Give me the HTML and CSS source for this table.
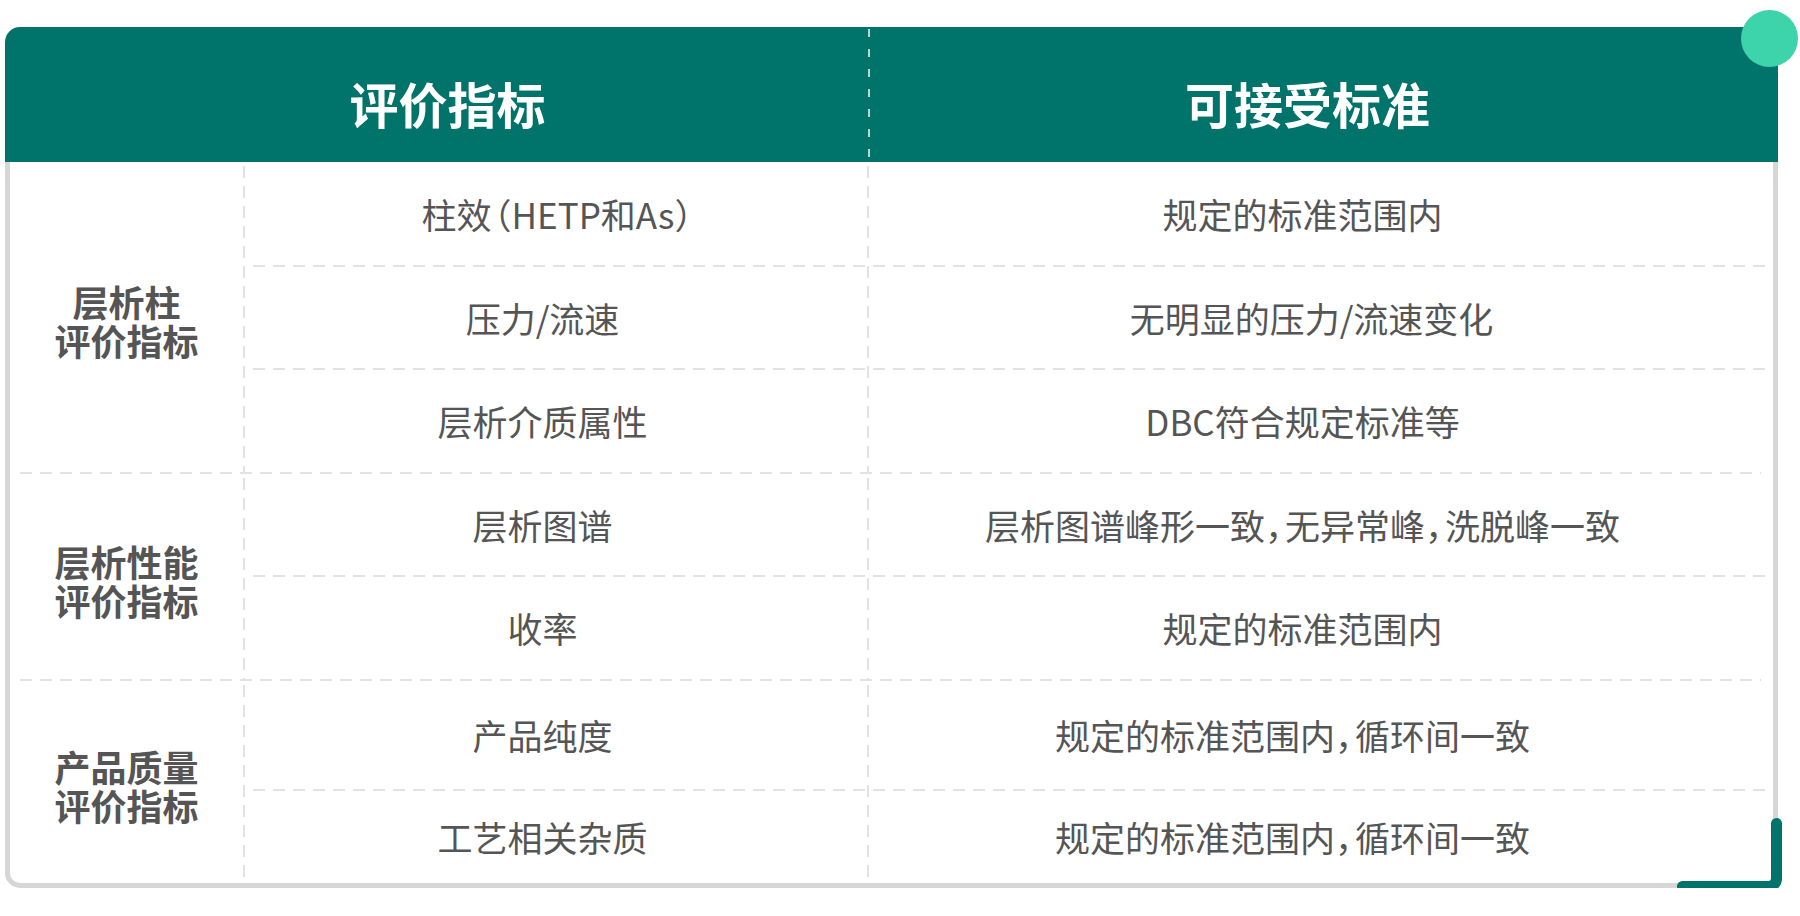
FILE: index.html
```html
<!DOCTYPE html>
<html lang="zh-CN">
<head>
<meta charset="utf-8">
<title>评价指标</title>
<link rel="stylesheet" href="styles.css">
</head>
<body>
<div class="card">
  <div class="head">
    <div class="h h1">评价指标</div>
    <div class="h h2">可接受标准</div>
  </div>
  <div class="tbody">
    <div class="group g1">
      <div class="label"><span class="ln">层析柱</span><span class="ln">评价指标</span></div>
      <div class="items">
        <div class="item r1"><div class="c2 nudge-r">柱效<span class="lp">（</span>HETP和As<span class="rp">）</span></div><div class="c3">规定的标准范围内</div></div>
        <div class="line"></div>
        <div class="item r2"><div class="c2">压力/流速</div><div class="c3 shift-r">无明显的压力/流速变化</div></div>
        <div class="line"></div>
        <div class="item r3"><div class="c2">层析介质属性</div><div class="c3">DBC符合规定标准等</div></div>
      </div>
    </div>
    <div class="sep"></div>
    <div class="group g2">
      <div class="label"><span class="ln">层析性能</span><span class="ln">评价指标</span></div>
      <div class="items">
        <div class="item r4"><div class="c2">层析图谱</div><div class="c3">层析图谱峰形一致<span class="cm">，</span>无异常峰<span class="cm">，</span>洗脱峰一致</div></div>
        <div class="line"></div>
        <div class="item r5"><div class="c2">收率</div><div class="c3">规定的标准范围内</div></div>
      </div>
    </div>
    <div class="sep"></div>
    <div class="group g3">
      <div class="label"><span class="ln">产品质量</span><span class="ln">评价指标</span></div>
      <div class="items">
        <div class="item r6"><div class="c2">产品纯度</div><div class="c3 shift-l">规定的标准范围内<span class="cm">，</span>循环间一致</div></div>
        <div class="line"></div>
        <div class="item r7"><div class="c2">工艺相关杂质</div><div class="c3 shift-l">规定的标准范围内<span class="cm">，</span>循环间一致</div></div>
      </div>
    </div>
  </div>
  <span class="dot"></span>
  <svg class="bracket" width="105" height="74" viewBox="0 0 105 74">
    <path d="M5.5 68.5 H91.5 A8 8 0 0 0 99.5 60.5 V5.5" fill="none" stroke="#00736b" stroke-width="11" stroke-linecap="round" stroke-linejoin="round"/>
  </svg>
</div>
</body>
</html>
```

FILE: styles.css
```css
html, body {
  margin: 0;
  padding: 0;
  background: #ffffff;
}

body {
  font-family: "Noto Sans CJK SC", "Noto Sans", sans-serif;
  color: #555555;
}

.card {
  position: relative;
  width: 1773px;
  margin: 27px 0 0 5px;
}

.head {
  display: grid;
  grid-template-columns: 863px 910px;
  height: 135px;
  background: #00736b;
  border-radius: 15px 0 0 0;
}

.h {
  display: flex;
  align-items: center;
  justify-content: center;
  padding-top: 16px;
  box-sizing: border-box;
  color: #ffffff;
  font-size: 49px;
  font-weight: 700;
  line-height: 1;
}

.h1 {
  padding-left: 22px;
}

.h2 {
  padding-right: 31px;
  background-image: repeating-linear-gradient(to bottom, rgba(255, 255, 255, 0.72) 0 8px, transparent 8px 20px);
  background-size: 2px 100%;
  background-position: 0 2px;
  background-repeat: no-repeat;
}

.tbody {
  border: 5px solid #d6d6d6;
  border-top: none;
  border-radius: 0 0 15px 15px;
}

.group {
  display: grid;
  grid-template-columns: 233px 1530px;
}

.label {
  display: flex;
  flex-direction: column;
  align-items: center;
  justify-content: center;
  padding-top: 8px;
  box-sizing: border-box;
  text-align: center;
  font-size: 36px;
  font-weight: 700;
  color: #555555;
}

.ln {
  display: block;
  height: 39px;
  line-height: 39px;
  white-space: nowrap;
}

.items {
  display: flex;
  flex-direction: column;
  background-image:
    repeating-linear-gradient(to bottom, #e2e2e2 0 12px, transparent 12px 20px),
    repeating-linear-gradient(to bottom, #e2e2e2 0 12px, transparent 12px 20px);
  background-size: 2px 100%, 2px 100%;
  background-position: 0 4px, 624px 4px;
  background-repeat: no-repeat;
}

.g3 .items {
  background-size: 2px calc(100% - 8px), 2px calc(100% - 8px);
}

.item {
  display: grid;
  grid-template-columns: 625px 905px;
  font-size: 35px;
  line-height: 1.2;
}

.r1 { height: 103px; }
.r2 { height: 101px; }
.r3 { height: 102px; }
.r4 { height: 101px; }
.r5 { height: 102px; }
.r6 { height: 108px; }
.r7 { height: 92px; }

.c2, .c3 {
  display: flex;
  align-items: center;
  justify-content: center;
  white-space: nowrap;
}

.c2 {
  padding-right: 26px;
}

.c2.nudge-r {
  padding-right: 0;
  padding-left: 5px;
}

.c3 {
  padding-right: 36px;
}

.c3.shift-r {
  padding-right: 18px;
}

.c3.shift-l {
  padding-right: 56px;
}

.cm,
.rp {
  font-feature-settings: "halt" 1;
  letter-spacing: 2.5px;
}

.lp {
  font-feature-settings: "halt" 1;
  margin-left: 2.5px;
}

.line {
  height: 2px;
  margin-left: 10px;
  background-image: repeating-linear-gradient(to right, #e2e2e2 0 12px, transparent 12px 20px);
}

.sep {
  height: 2px;
  margin: 0 12px 0 10px;
  background-image: repeating-linear-gradient(to right, #e2e2e2 0 12px, transparent 12px 20px);
}

.dot {
  position: absolute;
  left: 1736px;
  top: -17px;
  width: 57px;
  height: 57px;
  border-radius: 50%;
  background: #3dd3ab;
}

.bracket {
  position: absolute;
  right: -4px;
  bottom: -4px;
}
```
